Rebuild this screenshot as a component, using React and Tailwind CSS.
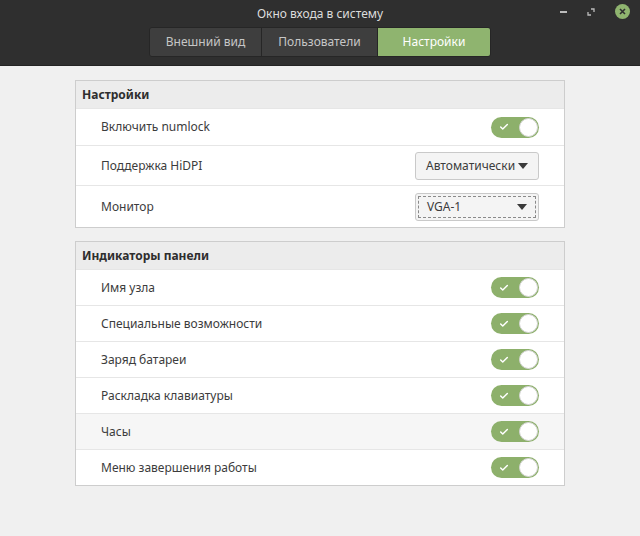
import { Check } from 'lucide-react';

const Switch = () => (
  <div className="w-[48px] h-[21px] rounded-full bg-[#8db06b] relative flex items-center pl-[8px]">
    <Check className="w-[10px] h-[10px] text-white" strokeWidth={3.5} />
    <div className="absolute right-[1px] top-[1px] w-[19px] h-[19px] rounded-full bg-white border border-[#d5d5d5]" />
  </div>
);

const Caret = () => (
  <svg width="10" height="6" viewBox="0 0 10 6"><path d="M0 0h10L5 6z" fill="#3a3a3a" /></svg>
);

const Combo = ({ label, focus }) => (
  <div className="w-[124px] h-[28px] rounded-[3px] bg-[#f4f4f4] border border-[#c9c9c9] flex items-center p-[2px]">
    <div className={`flex-1 h-full flex items-center justify-between pl-[8px] pr-[8px] ${focus ? 'border border-dashed border-[#8a8a8a]' : ''}`}>
      <span>{label}</span>
      <Caret />
    </div>
  </div>
);

const Row = ({ label, children, h = 'h-[36px]', hover }) => (
  <div className={`${h} flex items-center justify-between pl-[25px] pr-[25px] border-t border-[#e6e6e6] ${hover ? 'bg-[#f6f6f6]' : 'bg-white'}`}>
    <span>{label}</span>
    {children}
  </div>
);

const Section = ({ title, children }) => (
  <div className="border border-[#cdcdcd] bg-white">
    <div className="h-[27px] bg-[#ececec] flex items-center pl-[6px] font-bold text-[#2e2e2e]">{title}</div>
    {children}
  </div>
);

export default function App() {
  const indicators = ['Имя узла', 'Специальные возможности', 'Заряд батареи', 'Раскладка клавиатуры', 'Часы', 'Меню завершения работы'];
  return (
    <div className="w-[640px] h-[536px] bg-[#f0f0f0] text-[12px] text-[#3c3c3c] flex flex-col" style={{ fontFamily: '"Noto Sans", "DejaVu Sans", sans-serif' }}>
      <div className="h-[66px] bg-[#2f2f2f] relative flex flex-col items-center border-b border-[#242424]">
        <div className="h-[27px] flex items-center text-[#dcdcdc] text-[12px]">Окно входа в систему</div>
        <div className="flex h-[30px] rounded-[3px] overflow-hidden border border-[#262626]">
          <div className="w-[112px] flex items-center justify-center bg-[#3e3e3e] text-[#c6c6c6] border-r border-[#262626]">Внешний вид</div>
          <div className="w-[116px] flex items-center justify-center bg-[#3e3e3e] text-[#c6c6c6] border-r border-[#262626]">Пользователи</div>
          <div className="w-[112px] flex items-center justify-center bg-[#8fb46f] text-white">Настройки</div>
        </div>
        <div className="absolute right-[10px] top-[4px] flex items-center gap-[20px]">
          <div className="w-[7px] h-[2px] bg-[#bcbcbc]" />
          <svg width="8" height="8" viewBox="0 0 8 8"><path d="M4 1h3v3M4 7H1V4" stroke="#bcbcbc" strokeWidth="1.3" fill="none" /></svg>
          <div className="w-[15px] h-[15px] rounded-full bg-[#8fb46f] flex items-center justify-center">
            <svg width="7" height="7" viewBox="0 0 7 7"><path d="M1 1l5 5M6 1L1 6" stroke="#2f2f2f" strokeWidth="1.6" /></svg>
          </div>
        </div>
      </div>
      <div className="px-[75px] pt-[14px] flex flex-col gap-[13px]">
        <Section title="Настройки">
          <Row label="Включить numlock" h="h-[37px]"><Switch /></Row>
          <Row label="Поддержка HiDPI" h="h-[40px]"><Combo label="Автоматически" /></Row>
          <Row label="Монитор" h="h-[42px]"><Combo label="VGA-1" focus /></Row>
        </Section>
        <Section title="Индикаторы панели">
          {indicators.map((l) => (
            <Row key={l} label={l} hover={l === 'Часы'}><Switch /></Row>
          ))}
        </Section>
      </div>
    </div>
  );
}
